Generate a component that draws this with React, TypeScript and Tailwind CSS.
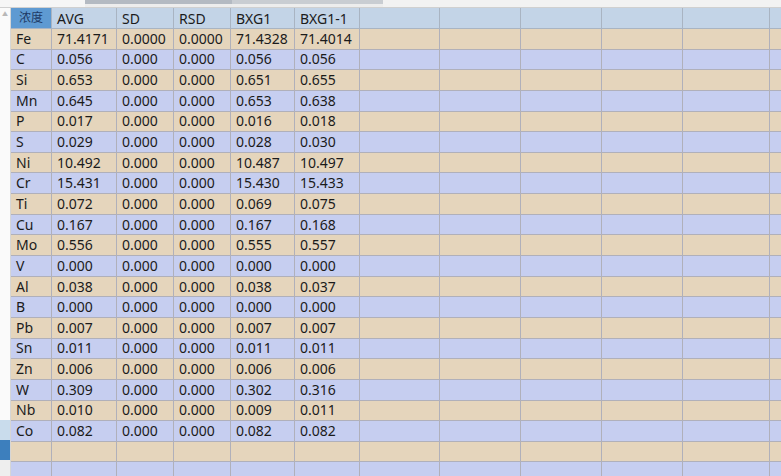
import React from "react";

const rows: string[][] = [
  ["Fe", "71.4171", "0.0000", "0.0000", "71.4328", "71.4014"],
  ["C", "0.056", "0.000", "0.000", "0.056", "0.056"],
  ["Si", "0.653", "0.000", "0.000", "0.651", "0.655"],
  ["Mn", "0.645", "0.000", "0.000", "0.653", "0.638"],
  ["P", "0.017", "0.000", "0.000", "0.016", "0.018"],
  ["S", "0.029", "0.000", "0.000", "0.028", "0.030"],
  ["Ni", "10.492", "0.000", "0.000", "10.487", "10.497"],
  ["Cr", "15.431", "0.000", "0.000", "15.430", "15.433"],
  ["Ti", "0.072", "0.000", "0.000", "0.069", "0.075"],
  ["Cu", "0.167", "0.000", "0.000", "0.167", "0.168"],
  ["Mo", "0.556", "0.000", "0.000", "0.555", "0.557"],
  ["V", "0.000", "0.000", "0.000", "0.000", "0.000"],
  ["Al", "0.038", "0.000", "0.000", "0.038", "0.037"],
  ["B", "0.000", "0.000", "0.000", "0.000", "0.000"],
  ["Pb", "0.007", "0.000", "0.000", "0.007", "0.007"],
  ["Sn", "0.011", "0.000", "0.000", "0.011", "0.011"],
  ["Zn", "0.006", "0.000", "0.000", "0.006", "0.006"],
  ["W", "0.309", "0.000", "0.000", "0.302", "0.316"],
  ["Nb", "0.010", "0.000", "0.000", "0.009", "0.011"],
  ["Co", "0.082", "0.000", "0.000", "0.082", "0.082"],
  ["", "", "", "", "", ""],
  ["", "", "", "", "", ""],
];

const widths = ["w-[41px]", "w-[65px]", "w-[57px]", "w-[57px]", "w-[64px]", "w-[65px]", "w-[80px]", "w-[81px]", "w-[81px]", "w-[81px]", "w-[87px]", "w-[20px]"];

const header = ["浓度", "AVG", "SD", "RSD", "BXG1", "BXG1-1", "", "", "", "", "", ""];

export default function App() {
  return (
    <div
      className="w-[781px] h-[476px] overflow-hidden bg-[#f3f3f3] flex flex-col text-[14px] text-[#1b1b1b]"
      style={{ fontFamily: '"Noto Sans", "Noto Sans CJK SC", sans-serif' }}
    >
      {/* top strip */}
      <div className="h-[8px] shrink-0 flex bg-[#ededed] border-b border-[#d0d0d0]">
        <div className="w-[85px] bg-[#f6f6f6]" />
        <div className="w-[147px] h-[4px] bg-[#b4bac2]" />
        <div className="w-[151px] h-[4px] bg-[#c9cdd2]" />
        <div className="flex-1 bg-[#f2f2f2]" />
      </div>

      <div className="flex flex-1 min-h-0">
        {/* left scroller strip */}
        <div className="w-[11px] shrink-0 flex flex-col bg-[#fafafa] border-r border-[#d6d6d6]">
          <div className="h-[12px] flex items-center justify-center text-[6px] text-[#b8b8b8]">▲</div>
          <div className="h-[400px]" />
          <div className="h-[20px] bg-[#c9dcec]" />
          <div className="h-[20px] bg-[#3d7fbd]" />
          <div className="flex-1 bg-[#eeeeee]" />
        </div>

        {/* grid */}
        <div className="flex-1 min-w-0 overflow-hidden flex flex-col">
          <div className="flex h-[21px] shrink-0 bg-[#c3d4e7]">
            {header.map((h, i) => (
              <div
                key={i}
                className={`${widths[i]} shrink-0 border-r border-b border-[#a9b4c2] flex items-center ${
                  i === 0 ? "bg-[#5e9ad2] justify-center text-[12px] text-[#1e3a66]" : "pl-[5px]"
                }`}
              >
                {h}
              </div>
            ))}
          </div>
          {rows.map((r, ri) => (
            <div
              key={ri}
              className={`flex h-[20.65px] shrink-0 ${ri % 2 === 0 ? "bg-[#e5d5bc]" : "bg-[#c6cef0]"}`}
            >
              {widths.map((w, ci) => (
                <div
                  key={ci}
                  className={`${w} shrink-0 border-r border-b border-[#b0b0ba] flex items-center pl-[5px] leading-none`}
                >
                  {r[ci] ?? ""}
                </div>
              ))}
            </div>
          ))}
        </div>
      </div>
    </div>
  );
}
